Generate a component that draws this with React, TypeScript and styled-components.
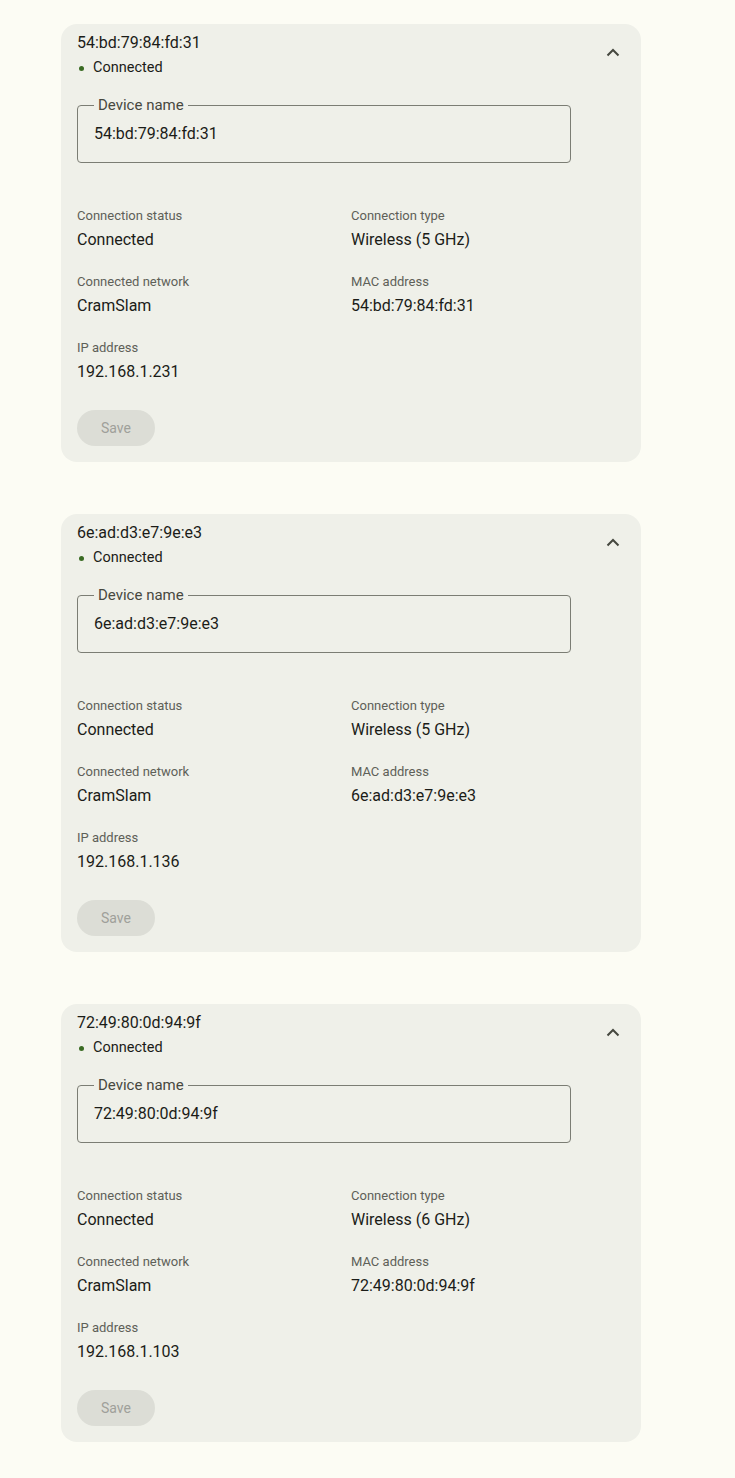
import React from 'react';
import styled, { createGlobalStyle } from 'styled-components';

const GlobalStyle = createGlobalStyle`
  body {
    background: #fcfcf4;
    color: #1b1c18;
    font-family: Roboto, "Liberation Sans", sans-serif;
    margin: 0;
  }
`;

const Page = styled.div`
  display: flex;
  flex-direction: column;
  gap: 52px;
  padding: 24px 0 36px 61px;
`;

const Card = styled.section`
  background: #eff0e9;
  border-radius: 16px;
  box-sizing: border-box;
  display: flex;
  flex-direction: column;
  padding: 8px 16px 16px;
  width: 580px;
`;

const Header = styled.div`
  align-items: flex-start;
  display: flex;
  justify-content: space-between;
`;

const HeaderText = styled.div`
  display: flex;
  flex-direction: column;
`;

const Title = styled.span`
  font-size: 16px;
  line-height: 22px;
`;

const Status = styled.span`
  align-items: center;
  display: flex;
  font-size: 14.5px;
  gap: 9px;
  line-height: 24px;
  margin-top: 2px;
  padding-left: 2px;

  &::before {
    background: #3a6b23;
    border-radius: 50%;
    content: '';
    height: 5px;
    width: 5px;
  }
`;

const Toggle = styled.button`
  align-items: center;
  background: none;
  border: none;
  color: #46483f;
  display: flex;
  height: 24px;
  justify-content: center;
  margin: 8px 0 0;
  padding: 0;
  width: 24px;
`;

const Field = styled.fieldset`
  border: 1px solid #7b7d74;
  border-radius: 4px;
  box-sizing: border-box;
  margin: 16px 0 0;
  padding: 0 16px;
  width: 494px;
`;

const Legend = styled.legend`
  color: #47483f;
  font-size: 15px;
  line-height: 18px;
  padding: 0 4px;
`;

const Input = styled.input`
  background: transparent;
  border: none;
  box-sizing: border-box;
  color: #1b1c18;
  font-family: inherit;
  font-size: 16px;
  height: 58px;
  margin-top: -10px;
  outline: none;
  padding: 0;
  width: 100%;
`;

const Details = styled.div`
  display: grid;
  grid-template-columns: 274px 1fr;
  margin-top: 45px;
  row-gap: 22px;
`;

const Item = styled.div`
  display: flex;
  flex-direction: column;
  gap: 4px;
`;

const Label = styled.span`
  color: #5e6058;
  font-size: 13px;
  line-height: 16px;
`;

const Value = styled.span`
  font-size: 16px;
  line-height: 24px;
`;

const SaveButton = styled.button`
  background: #dcddd6;
  border: none;
  border-radius: 18px;
  color: #9fa09a;
  font-family: inherit;
  font-size: 14px;
  height: 36px;
  margin-top: 26px;
  width: 78px;
`;

interface Device {
  mac: string;
  band: string;
  ip: string;
}

const devices: Device[] = [
  { mac: '54:bd:79:84:fd:31', band: 'Wireless (5 GHz)', ip: '192.168.1.231' },
  { mac: '6e:ad:d3:e7:9e:e3', band: 'Wireless (5 GHz)', ip: '192.168.1.136' },
  { mac: '72:49:80:0d:94:9f', band: 'Wireless (6 GHz)', ip: '192.168.1.103' },
];

function ChevronUp() {
  return (
    <svg width="14" height="9" viewBox="0 0 14 9" fill="none">
      <path d="M1.5 7.5 L7 2 L12.5 7.5" stroke="currentColor" strokeWidth="2" />
    </svg>
  );
}

function DeviceCard({ device }: { device: Device }) {
  return (
    <Card>
      <Header>
        <HeaderText>
          <Title>{device.mac}</Title>
          <Status>Connected</Status>
        </HeaderText>
        <Toggle aria-label="Collapse">
          <ChevronUp />
        </Toggle>
      </Header>
      <Field>
        <Legend>Device name</Legend>
        <Input defaultValue={device.mac} />
      </Field>
      <Details>
        <Item>
          <Label>Connection status</Label>
          <Value>Connected</Value>
        </Item>
        <Item>
          <Label>Connection type</Label>
          <Value>{device.band}</Value>
        </Item>
        <Item>
          <Label>Connected network</Label>
          <Value>CramSlam</Value>
        </Item>
        <Item>
          <Label>MAC address</Label>
          <Value>{device.mac}</Value>
        </Item>
        <Item>
          <Label>IP address</Label>
          <Value>{device.ip}</Value>
        </Item>
      </Details>
      <SaveButton disabled>Save</SaveButton>
    </Card>
  );
}

export default function App() {
  return (
    <>
      <GlobalStyle />
      <Page>
        {devices.map((d) => (
          <DeviceCard key={d.mac} device={d} />
        ))}
      </Page>
    </>
  );
}
